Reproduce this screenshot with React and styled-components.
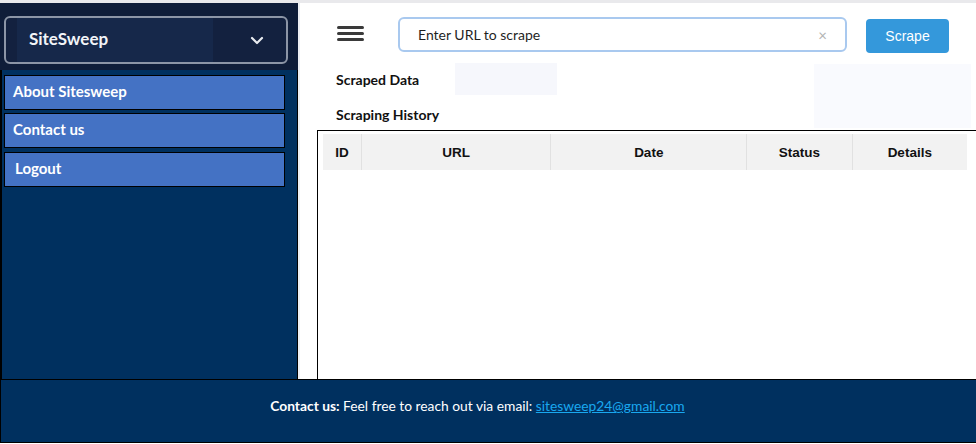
import React from "react";
import styled, { createGlobalStyle } from "styled-components";

const navy = "#00305f";
const menuBlue = "#4472c4";

const GlobalStyle = createGlobalStyle`
  html, body {
    margin: 0;
    padding: 0;
    background: #fff;
    font-family: "Lato", "Noto Sans", sans-serif;
  }
`;

const Page = styled.div`
  width: 976px;
  height: 444px;
  display: grid;
  grid-template-rows: 376px 64px;
  border-top: 3px solid #e9e9ec;
  overflow: hidden;
`;

const Body = styled.div`
  display: grid;
  grid-template-columns: 298px 1fr;
  min-height: 0;
`;

const Sidebar = styled.aside`
  display: grid;
  grid-template-rows: 67px 1fr;
`;

const Brand = styled.div`
  background: #0f1d39;
  padding: 13px 10px 6px 4px;
`;

const BrandSelect = styled.div`
  height: 44px;
  border: 2px solid #8c95a6;
  border-radius: 6px;
  background: #13213f;
  display: flex;
  align-items: center;
  justify-content: space-between;
  padding: 0 22px 0 11px;
`;

const BrandName = styled.div`
  height: 100%;
  width: 196px;
  background: #16284a;
  display: flex;
  align-items: center;
  padding-left: 12px;
  padding-bottom: 3px;
  box-sizing: border-box;
  color: #f2f4f8;
  font-weight: 700;
  font-size: 17px;
`;

const Nav = styled.nav`
  background: ${navy};
  border-left: 2px solid #000;
  border-right: 1px solid #000;
  padding: 5px 12px 0 2px;
  display: flex;
  flex-direction: column;
  gap: 3px;
`;

const NavItem = styled.a`
  display: flex;
  align-items: center;
  height: 35px;
  padding-bottom: 3px;
  box-sizing: border-box;
  background: ${menuBlue};
  border: 1px solid #000;
  padding-left: ${(p) => (p.$indent ? 10 : 8)}px;
  color: #fff;
  font-weight: 700;
  font-size: 15px;
  margin-top: ${(p) => (p.$extra ? 1 : 0)}px;
`;

const Main = styled.main`
  display: flex;
  flex-direction: column;
  border-left: 2px solid #eef0f4;
  min-height: 0;
`;

const Toolbar = styled.div`
  display: flex;
  align-items: center;
  height: 50px;
  padding: 13px 0 0 37px;
  box-sizing: border-box;
`;

const Hamburger = styled.div`
  width: 27px;
  display: flex;
  flex-direction: column;
  gap: 3px;
  margin-right: 34px;
  margin-top: -2px;

  span {
    display: block;
    height: 3px;
    border-radius: 2px;
    background: #3a3a3a;
  }
`;

const UrlField = styled.div`
  width: 449px;
  height: 35px;
  box-sizing: border-box;
  border: 2px solid #a9c9ef;
  border-radius: 6px;
  display: flex;
  align-items: center;
  justify-content: space-between;
  padding: 0 18px;
  font-size: 14px;
  color: #1f1f1f;
`;

const Clear = styled.span`
  color: #b3b3b3;
  font-size: 15px;
`;

const ScrapeButton = styled.button`
  margin-left: 19px;
  width: 83px;
  height: 34px;
  border: none;
  border-radius: 4px;
  background: #3498db;
  color: #fff;
  font-family: "Liberation Sans", Arial, sans-serif;
  font-size: 14px;
  margin-top: 2px;
`;

const TabsArea = styled.div`
  display: flex;
  justify-content: space-between;
  margin-top: 10px;
  padding-right: 6px;
`;

const Tabs = styled.div`
  display: flex;
  flex-direction: column;
  padding-left: 26px;
`;

const TabRow = styled.div`
  display: flex;
  height: ${(p) => p.$h}px;
`;

const Tab = styled.div`
  display: flex;
  align-items: center;
  padding: ${(p) => p.$top || 0}px 36px 0 10px;
  background: #fff;
  font-weight: 700;
  font-size: 14px;
  color: #111;
`;

const TabFill = styled.div`
  width: 102px;
  background: #f6f7fc;
`;

const SidePanel = styled.div`
  width: 157px;
  height: 64px;
  margin-top: 1px;
  background: #f9fafe;
`;

const TableBox = styled.div`
  flex: 1;
  margin-left: 17px;
  border: 1px solid #000;
  border-bottom: none;
  padding: 3px 9px 0 5px;
`;

const Table = styled.table`
  width: 644px;
  border-collapse: collapse;
  font-family: "Liberation Sans", Arial, sans-serif;
`;

const Th = styled.th`
  width: ${(p) => p.$w}px;
  height: 36px;
  background: #f2f2f2;
  border-left: 1px solid #e1e1e1;
  font-size: 13.5px;
  font-weight: 700;
  color: #111;
  text-align: center;
  padding: 0;

  &:first-child {
    border-left: none;
  }
`;

const Footer = styled.footer`
  background: ${navy};
  border: 1px solid #000;
  color: #fff;
  text-align: center;
  font-size: 13.8px;
  padding: 17px 22px 0 0;

  b {
    font-weight: 700;
  }

  a {
    color: #19a8ef;
    text-decoration: underline;
  }
`;

const Chevron = () => (
  <svg width="14" height="9" viewBox="0 0 14 9">
    <path
      d="M2 2 L7 7 L12 2"
      fill="none"
      stroke="#e8ebf0"
      strokeWidth="2.2"
      strokeLinecap="round"
      strokeLinejoin="round"
    />
  </svg>
);

const columns = [
  { label: "ID", w: 38 },
  { label: "URL", w: 190 },
  { label: "Date", w: 196 },
  { label: "Status", w: 105 },
  { label: "Details", w: 115 },
];

export default function App() {
  return (
    <>
      <GlobalStyle />
      <Page>
        <Body>
          <Sidebar>
            <Brand>
              <BrandSelect>
                <BrandName>SiteSweep</BrandName>
                <Chevron />
              </BrandSelect>
            </Brand>
            <Nav>
              <NavItem>About Sitesweep</NavItem>
              <NavItem>Contact us</NavItem>
              <NavItem $indent $extra>
                Logout
              </NavItem>
            </Nav>
          </Sidebar>
          <Main>
            <Toolbar>
              <Hamburger>
                <span />
                <span />
                <span />
              </Hamburger>
              <UrlField>
                <span>Enter URL to scrape</span>
                <Clear>×</Clear>
              </UrlField>
              <ScrapeButton>Scrape</ScrapeButton>
            </Toolbar>
            <TabsArea>
              <Tabs>
                <TabRow $h={32}>
                  <Tab>Scraped Data</Tab>
                  <TabFill />
                </TabRow>
                <TabRow $h={35}>
                  <Tab $top={3}>Scraping History</Tab>
                </TabRow>
              </Tabs>
              <SidePanel />
            </TabsArea>
            <TableBox>
              <Table>
                <thead>
                  <tr>
                    {columns.map((c) => (
                      <Th key={c.label} $w={c.w}>
                        {c.label}
                      </Th>
                    ))}
                  </tr>
                </thead>
              </Table>
            </TableBox>
          </Main>
        </Body>
        <Footer>
          <b>Contact us:</b> Feel free to reach out via email:{" "}
          <a href="mailto:sitesweep24@gmail.com">sitesweep24@gmail.com</a>
        </Footer>
      </Page>
    </>
  );
}
